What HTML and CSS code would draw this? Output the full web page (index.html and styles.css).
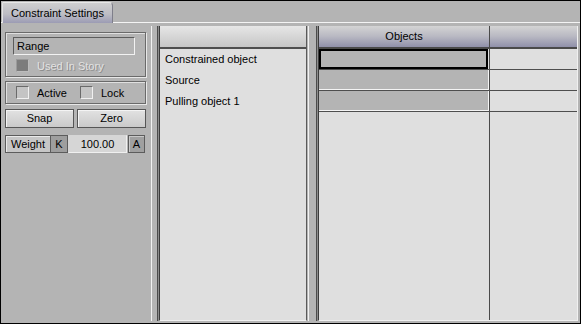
FILE: index.html
```html
<!DOCTYPE html>
<html>
<head>
<meta charset="utf-8">
<link rel="stylesheet" href="styles.css">
</head>
<body>
<div class="window">
  <div class="tabbar">
    <div class="tab">Constraint Settings</div>
  </div>
  <div class="main">
    <div class="left">
      <div class="group g1">
        <div class="field">Range</div>
        <div class="check disabled"><span class="box"></span><span class="lbl">Used In Story</span></div>
      </div>
      <div class="group g2">
        <div class="check"><span class="box"></span><span class="lbl">Active</span></div>
        <div class="check"><span class="box"></span><span class="lbl">Lock</span></div>
      </div>
      <div class="btnrow">
        <div class="btn">Snap</div>
        <div class="btn">Zero</div>
      </div>
      <div class="weight">
        <div class="w-label">Weight</div>
        <div class="w-key">K</div>
        <div class="w-value">100.00</div>
        <div class="w-a">A</div>
      </div>
    </div>
    <div class="split s1"></div>
    <div class="list">
      <div class="list-head"></div>
      <div class="list-row">Constrained object</div>
      <div class="list-row">Source</div>
      <div class="list-row">Pulling object 1</div>
    </div>
    <div class="split s2"></div>
    <div class="grid">
      <div class="grid-head">
        <div class="c1 hcell">Objects</div>
        <div class="c2 hcell"></div>
      </div>
      <div class="grid-row">
        <div class="c1 cell sel"></div>
        <div class="c2 cell"></div>
      </div>
      <div class="grid-row">
        <div class="c1 cell"></div>
        <div class="c2 cell"></div>
      </div>
      <div class="grid-row">
        <div class="c1 cell"></div>
        <div class="c2 cell"></div>
      </div>
      <div class="grid-fill">
        <div class="c1 fill"></div>
        <div class="c2 fill"></div>
      </div>
    </div>
  </div>
</div>
</body>
</html>
```

FILE: styles.css
```css
* { box-sizing: border-box; }
html, body { margin: 0; padding: 0; background: #b4b4b4; }
body {
  font-family: "Liberation Sans", Arial, sans-serif;
  font-size: 11px;
  color: #000;
}
.window {
  width: 581px;
  height: 324px;
  border: 1px solid #000;
  background: #b4b4b4;
  display: flex;
  flex-direction: column;
  overflow: hidden;
}
.tabbar {
  height: 22px;
  border-bottom: 1px solid #f4f4f4;
  display: flex;
  align-items: flex-end;
  padding-left: 1px;
}
.tab {
  width: 111px;
  height: 21px;
  margin-bottom: -1px;
  border: 1px solid #7e7e8a;
  border-left-color: #e4e4e4;
  border-top-color: #e8e8e8;
  border-bottom: none;
  border-top-right-radius: 4px;
  background: linear-gradient(#cfcfd0, #bdbdc4 55%, #9c9cb4);
  padding-left: 8px;
  line-height: 20px;
  font-size: 11px;
  position: relative;
  z-index: 1;
}
.main {
  flex: 1;
  display: flex;
  padding: 3px 2px 2px 0;
}
.left {
  width: 149px;
  margin-top: -3px;
  padding: 9px 0 0 4px;
  display: flex;
  flex-direction: column;
}
.group {
  width: 141px;
  border: 1px solid #6a6a6a;
  box-shadow: 1px 1px 0 #e8e8e8, inset 1px 1px 0 #e0e0e0;
}
.g1 { height: 45px; padding: 4px 0 0 7px; }
.g2 {
  height: 23px;
  margin-top: 4px;
  padding: 4px 0 0 10px;
  display: flex;
}
.g2 .check { width: 64px; }
.field {
  width: 122px;
  height: 18px;
  border: 1px solid;
  border-color: #5c5c5c #f2f2f2 #f2f2f2 #5c5c5c;
  padding-left: 3px;
  line-height: 16px;
}
.check {
  display: flex;
  align-items: center;
  height: 13px;
}
.g1 .check { margin-top: 4px; margin-left: 3px; }
.box {
  width: 13px;
  height: 13px;
  border: 1px solid;
  border-color: #6a6a6a #f0f0f0 #f0f0f0 #6a6a6a;
  background: #c4c4c4;
  margin-right: 8px;
  flex: none;
}
.disabled .box {
  background: #7c7c7c;
  border-color: #9a9a9a #bcbcbc #bcbcbc #9a9a9a;
}
.disabled .lbl {
  color: #e2e2e2;
  text-shadow: 1px 1px 0 #8c8c8c;
}
.btnrow {
  display: flex;
  gap: 3px;
  margin-top: 5px;
}
.btn {
  width: 69px;
  height: 19px;
  border: 1px solid #565656;
  background: linear-gradient(#e2e2e2, #cacaca);
  box-shadow: inset 1px 1px 0 #f4f4f4;
  text-align: center;
  line-height: 17px;
}
.weight {
  display: flex;
  margin-top: 7px;
  height: 18px;
  width: 140px;
}
.weight > div {
  height: 18px;
  line-height: 16px;
  text-align: center;
  border: 1px solid #5c5c5c;
}
.w-label {
  width: 46px;
  background: #c6c6c6;
  box-shadow: inset 1px 1px 0 #eaeaea;
}
.w-key {
  width: 17px;
  background: #9e9e9e;
  border-left: none !important;
}
.w-value {
  width: 59px;
  background: #d6d6d6;
  border-color: #d6d6d6 #f0f0f0 #f0f0f0 #d6d6d6 !important;
}
.w-a {
  width: 17px;
  margin-left: 1px;
  background: #a0a0a0;
  box-shadow: inset 1px 1px 0 #c8c8c8;
}
.split { height: 100%; }
.s1 {
  width: 9px;
  background: linear-gradient(90deg, #b4b4b4 0 1px, #f2f2f2 1px 2px, #b4b4b4 2px 7px, #4c4c4c 7px 8px, #8c8c8c 8px 9px);
}
.s2 {
  width: 11px;
  background: linear-gradient(90deg, #b4b4b4 0 1px, #f2f2f2 1px 2px, #b4b4b4 2px 9px, #4c4c4c 9px 10px, #8c8c8c 10px 11px);
}
.list {
  width: 148px;
  background: #dfdfdf;
  border-left: 1px solid #3c3c3c;
  border-right: 1px solid #5a5a5a;
  border-bottom: 1px solid #f0f0f0;
}
.list-head {
  height: 23px;
  background: linear-gradient(#e6e6e6, #c6c6c6);
  border-bottom: 2px solid #4e4e4e;
}
.list-row {
  height: 21px;
  line-height: 21px;
  padding-left: 5px;
  white-space: nowrap;
}
.grid {
  width: 260px;
  background: #dfdfdf;
  border-left: 1px solid #3c3c3c;
  border-right: 1px solid #f0f0f0;
  border-bottom: 1px solid #f0f0f0;
  display: flex;
  flex-direction: column;
}
.grid-head, .grid-row, .grid-fill { display: flex; }
.grid-head {
  height: 23px;
  border-bottom: 2px solid #4a4a4a;
}
.c1 { width: 170px; }
.c2 { flex: 1; border-left: 1px solid #4a4a4a; }
.hcell {
  height: 21px;
  line-height: 21px;
  text-align: center;
  background: linear-gradient(#d4d4d4, #b8b8c2 50%, #9090aa);
}
.grid-row {
  height: 21px;
  border-bottom: 1px solid #4e4e4e;
}
.cell { height: 20px; }
.c1.cell {
  background: #b4b4b4;
  border-right: 1px solid #f4f4f4;
  border-bottom: 1px solid #f4f4f4;
}
.c1.cell.sel {
  border: 2px solid #000;
  margin-right: 1px;
  width: 169px;
}
.grid-fill { flex: 1; }
.fill { height: 100%; }
```
